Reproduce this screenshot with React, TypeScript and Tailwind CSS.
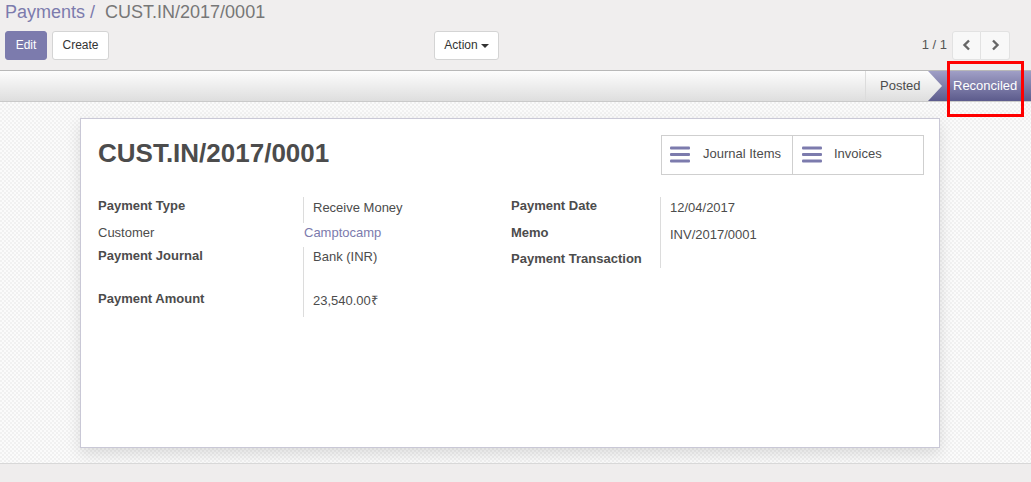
import React from "react";

function BarsIcon() {
  return (
    <svg width="20" height="17" viewBox="0 0 20 17" className="shrink-0 -mt-[1px]">
      <rect x="0" y="0.5" width="20" height="3" rx="1" fill="#7c7bad" />
      <rect x="0" y="7" width="20" height="3" rx="1" fill="#7c7bad" />
      <rect x="0" y="13.5" width="20" height="3" rx="1" fill="#7c7bad" />
    </svg>
  );
}

function Chevron({ dir }: { dir: "l" | "r" }) {
  return (
    <svg width="10" height="12" viewBox="0 0 10 12">
      <path
        d={dir === "l" ? "M7 1.5 L2.5 6 L7 10.5" : "M3 1.5 L7.5 6 L3 10.5"}
        stroke="#666"
        strokeWidth="2.4"
        fill="none"
        strokeLinejoin="miter"
      />
    </svg>
  );
}

export default function App() {
  return (
    <div
      className="relative w-[1031px] h-[482px] overflow-hidden bg-[#f0eeee] text-[13px] text-[#4c4c4c]"
      style={{ fontFamily: '"Liberation Sans", Arial, sans-serif' }}
    >
      {/* control panel */}
      <div className="h-[71px] border-b border-[#b8b8b8] bg-[#f0eeee]">
        <div className="pl-[5px] pt-[1px] h-[26px] text-[18px] leading-[22px]">
          <span className="text-[#7c7bad]">Payments</span>
          <span className="text-[#7c7bad]"> / </span>
          <span className="text-[#777777]">&nbsp;CUST.IN/2017/0001</span>
        </div>
        <div className="flex items-center pt-[4px] h-[34px]">
          <div className="w-[434px] pl-[5px] flex gap-[5px]">
            <button className="h-[29px] w-[42px] rounded-[3px] bg-[#7c7bad] text-white text-[12px] border border-[#7c7bad]">
              Edit
            </button>
            <button className="h-[29px] w-[57px] rounded-[3px] bg-white text-[#333] text-[12px] border border-[#d4d4d4]">
              Create
            </button>
          </div>
          <button className="h-[29px] w-[65px] rounded-[3px] bg-white text-[#333] text-[12px] border border-[#d4d4d4] flex items-center justify-center gap-[3px]">
            Action
            <span className="inline-block w-0 h-0 border-l-[4px] border-r-[4px] border-t-[4px] border-l-transparent border-r-transparent border-t-[#333] mt-[1px]" />
          </button>
          <div className="flex-1" />
          <span className="text-[13px] text-[#555] mr-[5px] mt-[-1px]">1 / 1</span>
          <div className="flex mr-[21px]">
            <button className="h-[29px] w-[29px] bg-[#f8f8f8] border border-[#e2e2e2] rounded-l-[3px] flex items-center justify-center">
              <Chevron dir="l" />
            </button>
            <button className="h-[29px] w-[29px] bg-[#f8f8f8] border border-l-0 border-[#e2e2e2] rounded-r-[3px] flex items-center justify-center">
              <Chevron dir="r" />
            </button>
          </div>
        </div>
      </div>

      {/* status bar */}
      <div className="h-[31px] flex justify-end border-b border-[#cacaca] bg-[linear-gradient(#fdfdfd,#dedede)]">
        <div className="relative z-10 h-full w-[77px] border-l border-[#dcdcdc] bg-[linear-gradient(#fdfdfd,#dedede)] [clip-path:polygon(0_0,63px_0,77px_50%,63px_100%,0_100%)] flex items-center pl-[14px] text-[13px] text-[#4c4c4c]">
          Posted
        </div>
        <div className="h-full w-[103px] -ml-[14px] bg-[linear-gradient(#a09fc6,#5c5b8c)] flex items-center pl-[25px] text-[13px] text-white">
          Reconciled
        </div>
      </div>

      {/* sheet area */}
      <div className="h-[361px] bg-[#f7f7f7] bg-[repeating-conic-gradient(#f1f1f1_0_25%,#fbfbfb_0_50%)] bg-[length:4px_4px] pt-[16px] pl-[80px]">
        <div className="w-[860px] h-[330px] bg-white border border-[#c9c8d6] shadow-[0_6px_14px_rgba(0,0,0,0.12)] pl-[17px] pr-[15px]">
          <div className="flex justify-between items-start pt-[16px]">
            <h1 className="text-[26px] font-bold leading-[28px] text-[#4c4c4c] mt-[4px]">
              CUST.IN/2017/0001
            </h1>
            <div className="flex border border-[#cfcfcf] h-[40px]">
              <div className="w-[131px] flex items-center pl-[8px] gap-[13px] border-r border-[#cfcfcf]">
                <BarsIcon />
                <span className="text-[13px] text-[#4c4c4c] -mt-[2px]">Journal Items</span>
              </div>
              <div className="w-[130px] flex items-center pl-[9px] gap-[12px]">
                <BarsIcon />
                <span className="text-[13px] text-[#4c4c4c] -mt-[2px]">Invoices</span>
              </div>
            </div>
          </div>

          <div className="flex mt-[22px]">
            {/* left group */}
            <div className="w-[413px] flex flex-col">
              <div className="flex h-[26px]">
                <div className="w-[206px] border-r border-[#dcdcdc] font-bold leading-[18px]">Payment Type</div>
                <div className="pl-[9px] pt-[2px] leading-[18px]">Receive Money</div>
              </div>
              <div className="flex h-[24px] items-start pt-[1px]">
                <div className="w-[206px] leading-[18px]">Customer</div>
                <div className="leading-[18px] text-[#7c7bad]">Camptocamp</div>
              </div>
              <div className="flex h-[70px]">
                <div className="w-[206px] border-r border-[#dcdcdc] flex flex-col">
                  <div className="font-bold leading-[18px] h-[43px]">Payment Journal</div>
                  <div className="font-bold leading-[18px]">Payment Amount</div>
                </div>
                <div className="flex flex-col pl-[9px]">
                  <div className="leading-[18px] pt-[1px] h-[43px]">Bank (INR)</div>
                  <div className="leading-[18px] pt-[2px]">23,540.00₹</div>
                </div>
              </div>
            </div>
            {/* right group */}
            <div className="flex-1 flex">
              <div className="w-[150px] border-r border-[#dcdcdc] h-[71px] flex flex-col">
                <div className="font-bold leading-[18px] h-[27px]">Payment Date</div>
                <div className="font-bold leading-[18px] h-[27px]">Memo</div>
                <div className="font-bold leading-[18px]">Payment Transaction</div>
              </div>
              <div className="flex flex-col pl-[9px]">
                <div className="leading-[18px] pt-[2px] h-[27px]">12/04/2017</div>
                <div className="leading-[18px] pt-[2px] h-[27px]">INV/2017/0001</div>
              </div>
            </div>
          </div>
        </div>
      </div>

      {/* bottom bar */}
      <div className="h-[19px] border-t border-[#d8d8d8] bg-[#efeded]" />

      {/* red annotation box */}
      <div className="absolute left-[947px] top-[61px] w-[77px] h-[56px] border-[3px] border-[#ff0000]" />
    </div>
  );
}
